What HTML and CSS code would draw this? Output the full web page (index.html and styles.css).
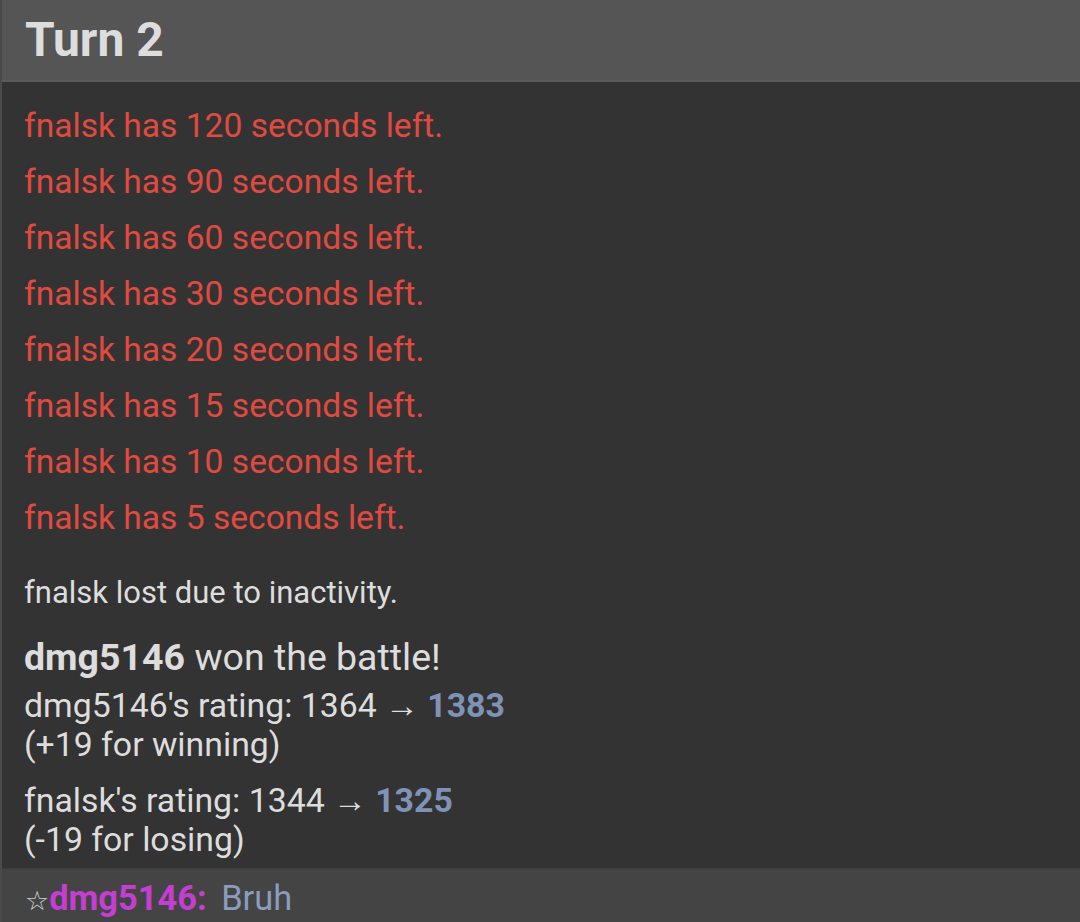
FILE: index.html
```html
<!DOCTYPE html>
<html>
<head>
<meta charset="utf-8">
<link rel="stylesheet" href="styles.css">
</head>
<body>
<div class="page">
  <div class="turn">Turn 2</div>
  <div class="log">
    <div class="timer">fnalsk has 120 seconds left.</div>
    <div class="timer">fnalsk has 90 seconds left.</div>
    <div class="timer">fnalsk has 60 seconds left.</div>
    <div class="timer">fnalsk has 30 seconds left.</div>
    <div class="timer">fnalsk has 20 seconds left.</div>
    <div class="timer">fnalsk has 15 seconds left.</div>
    <div class="timer">fnalsk has 10 seconds left.</div>
    <div class="timer">fnalsk has 5 seconds left.</div>
    <div class="notice">fnalsk lost due to inactivity.</div>
    <div class="win"><strong>dmg5146</strong> won the battle!</div>
    <div class="rating">dmg5146's rating: 1364 &rarr; <strong>1383</strong><br>(+19 for winning)</div>
    <div class="rating">fnalsk's rating: 1344 &rarr; <strong>1325</strong><br>(-19 for losing)</div>
  </div>
  <div class="chat"><span class="star">☆</span><span class="user">dmg5146:</span> <span class="msg">Bruh</span></div>
</div>
</body>
</html>
```
FILE: styles.css
```css
html, body {
  margin: 0;
  padding: 0;
  background: #333;
}
body {
  font-family: Roboto, "Liberation Sans", sans-serif;
  width: 1080px;
  height: 922px;
  overflow: hidden;
}
.page {
  border-left: 2px solid #4a4a4a;
  height: 922px;
  display: flex;
  flex-direction: column;
}
.turn {
  background: #555;
  color: #ddd;
  font-weight: bold;
  font-size: 48px;
  line-height: 80px;
  height: 80px;
  padding-left: 23px;
  border-bottom: 2px solid #5a5a5a;
}
.log {
  flex: 1;
  padding: 16px 22px 0;
  color: #ddd;
}
.timer {
  color: #e04a40;
  font-size: 33.6px;
  line-height: 56px;
}
.notice {
  font-size: 31px;
  line-height: 38px;
  margin-top: 28px;
}
.win {
  font-size: 37.5px;
  line-height: 44px;
  margin-top: 23px;
}
.rating {
  font-size: 33.8px;
  line-height: 39px;
  margin-top: 17px;
}
.rating strong {
  color: #7f93b6;
}
.win + .rating {
  margin-top: 7px;
}
.chat {
  background: #444;
  height: 53px;
  line-height: 58px;
  padding-left: 23px;
  font-size: 34.4px;
  border-top: 1px solid #3c3c3c;
}
.star {
  color: #ccc;
  font-family: "DejaVu Sans", sans-serif;
  font-size: 27px;
}
.user {
  color: #c43fd1;
  font-weight: bold;
}
.msg {
  color: #8a9dbb;
  margin-left: 6px;
}
```
